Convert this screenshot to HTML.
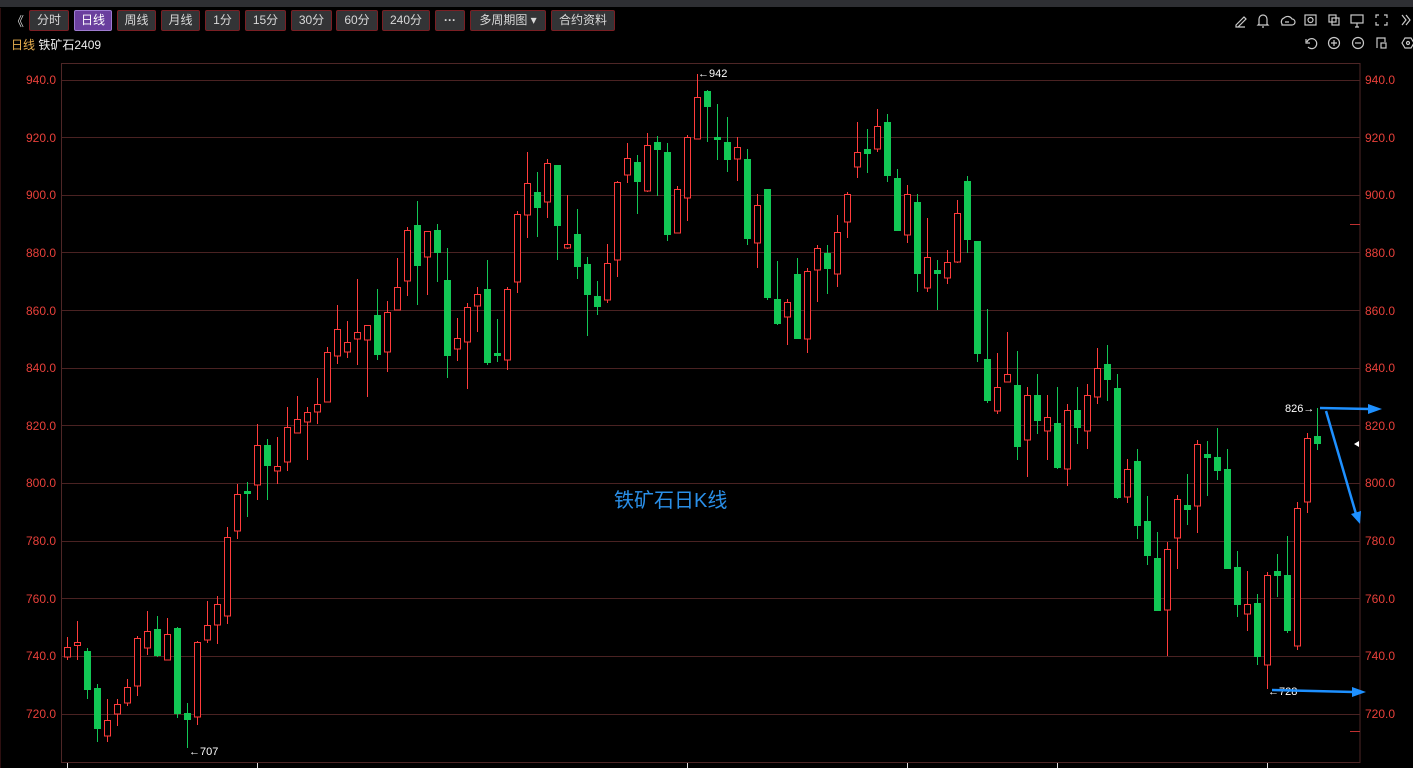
<!DOCTYPE html>
<html><head><meta charset="utf-8"><style>
*{margin:0;padding:0;box-sizing:border-box}
body{width:1413px;height:768px;background:#000;overflow:hidden;position:relative;font-family:"Liberation Sans","Noto Sans CJK SC",sans-serif;color:#ddd}
.top{position:absolute;left:0;top:0;width:1413px;height:7px;background:#2e2f33}
.btn{position:absolute;top:10px;height:21px;background:#333436;border:1px solid #7a1f24;color:#d8d8d8;font-size:12px;line-height:19px;text-align:center;border-radius:2px}
.sel{background:#6a3f9e;border-color:#9d7bd0;color:#fff}
.ax{position:absolute;font-size:12px;color:#e8403a}
svg{position:absolute;left:0;top:0}
</style></head><body>
<div class="top"></div>
<div style="position:absolute;left:11px;top:11px;font-size:13px;color:#ccc">《</div>
<div class="btn" style="left:29px;width:40px">分时</div>
<div class="btn sel" style="left:74px;width:38px">日线</div>
<div class="btn" style="left:117px;width:39px">周线</div>
<div class="btn" style="left:161px;width:39px">月线</div>
<div class="btn" style="left:205px;width:35px">1分</div>
<div class="btn" style="left:245px;width:41px">15分</div>
<div class="btn" style="left:291px;width:41px">30分</div>
<div class="btn" style="left:336px;width:42px">60分</div>
<div class="btn" style="left:382px;width:48px">240分</div>
<div class="btn" style="left:435px;width:30px;font-weight:bold">···</div>
<div class="btn" style="left:470px;width:76px">多周期图 ▾</div>
<div class="btn" style="left:551px;width:64px">合约资料</div>
<div style="position:absolute;left:11px;top:36px;font-size:12px"><span style="color:#e8b050">日线</span> <span style="color:#eee">铁矿石2409</span></div>
<div class="ax" style="left:26px;top:73px">940.0</div><div class="ax" style="left:26px;top:131px">920.0</div><div class="ax" style="left:26px;top:188px">900.0</div><div class="ax" style="left:26px;top:246px">880.0</div><div class="ax" style="left:26px;top:304px">860.0</div><div class="ax" style="left:26px;top:361px">840.0</div><div class="ax" style="left:26px;top:419px">820.0</div><div class="ax" style="left:26px;top:476px">800.0</div><div class="ax" style="left:26px;top:534px">780.0</div><div class="ax" style="left:26px;top:592px">760.0</div><div class="ax" style="left:26px;top:649px">740.0</div><div class="ax" style="left:26px;top:707px">720.0</div>
<div class="ax" style="left:1365px;top:73px">940.0</div><div class="ax" style="left:1365px;top:131px">920.0</div><div class="ax" style="left:1365px;top:188px">900.0</div><div class="ax" style="left:1365px;top:246px">880.0</div><div class="ax" style="left:1365px;top:304px">860.0</div><div class="ax" style="left:1365px;top:361px">840.0</div><div class="ax" style="left:1365px;top:419px">820.0</div><div class="ax" style="left:1365px;top:476px">800.0</div><div class="ax" style="left:1365px;top:534px">780.0</div><div class="ax" style="left:1365px;top:592px">760.0</div><div class="ax" style="left:1365px;top:649px">740.0</div><div class="ax" style="left:1365px;top:707px">720.0</div>
<div style="position:absolute;left:614px;top:484px;font-size:20px;color:#2a8fe8">铁矿石日K线</div>
<div style="position:absolute;left:698px;top:68px;font-size:11px;color:#fff">←942</div>
<div style="position:absolute;left:189px;top:746px;font-size:11px;color:#fff">←707</div>
<div style="position:absolute;left:1268px;top:686px;font-size:11px;color:#fff">←728</div>
<div style="position:absolute;left:1285px;top:403px;font-size:11px;color:#fff">826→</div>
<svg width="1413" height="768" viewBox="0 0 1413 768">
<g stroke="#c9c9c9" stroke-width="1.2" fill="none">
<path d="M1236 25l8-8 2 2-8 8h-2z M1236 27h9"/>
<path d="M1259 24v-5a4 4 0 0 1 8 0v5l1 1h-10z M1262 27h2"/>
<path d="M1282 24a4 4 0 0 1 2-6 5 5 0 0 1 8 1 3 3 0 0 1 0 6h-10z M1285 22h4"/>
<rect x="1305" y="15" width="11" height="10"/><circle cx="1310.5" cy="20" r="2.5"/>
<rect x="1329" y="15" width="7" height="7"/><rect x="1332" y="18" width="7" height="7"/>
<rect x="1351" y="15" width="12" height="8"/><path d="M1355 27h4M1357 23v4"/>
<path d="M1376 18v-3h3M1387 18v-3h-3M1376 22v3h3M1387 22v3h-3"/>
<path d="M1402 15l4 5-4 5M1406 15l4 5-4 5"/>
<path d="M1307 42a5 5 0 1 1 1 5M1306 39v4h4"/>
<circle cx="1334" cy="43" r="5.5"/><path d="M1331 43h6M1334 40v6"/>
<circle cx="1358" cy="43" r="5.5"/><path d="M1355 43h6"/>
<path d="M1377 48v-10h8v4"/><rect x="1381" y="43" width="5" height="5"/>
<path d="M1402 43l3-5h6l3 5-3 5h-6z"/><circle cx="1408" cy="43" r="1.5"/>
</g>
<path d="M0 8V768" stroke="#5a1e20"/>
<rect x="61.5" y="63.5" width="1298.5" height="699" fill="none" stroke="#4e2626"/>
<g stroke="#4a2222" stroke-width="1">
<path d="M62 80.5H1360M62 137.5H1360M62 195.5H1360M62 252.5H1360M62 310.5H1360M62 368.5H1360M62 425.5H1360M62 483.5H1360M62 541.5H1360M62 598.5H1360M62 656.5H1360M62 714.5H1360"/>
</g>
<path d="M1350 224.5h10M1350 731.5h10" stroke="#c03030"/>
<path d="M67.5 763v5M257.5 763v5M687.5 763v5M907.5 763v5M1057.5 763v5M1267.5 763v5" stroke="#ddd"/>
<path d="M1359 441l-5 3 5 3z" fill="#fff"/>
<g id="c">
<line x1="67.5" y1="637" x2="67.5" y2="660" stroke="#ff3b3b"/><rect x="64.5" y="647.5" width="6" height="9.5" fill="#000" stroke="#ff3b3b"/>
<line x1="77.5" y1="621" x2="77.5" y2="660" stroke="#ff3b3b"/><rect x="74.5" y="642.5" width="6" height="3" fill="#000" stroke="#ff3b3b"/>
<line x1="87.5" y1="648" x2="87.5" y2="699" stroke="#12c755"/><rect x="84" y="651" width="7" height="39" fill="#12c755"/>
<line x1="97.5" y1="684" x2="97.5" y2="742" stroke="#12c755"/><rect x="94" y="688" width="7" height="41" fill="#12c755"/>
<line x1="107.5" y1="699" x2="107.5" y2="742" stroke="#ff3b3b"/><rect x="104.5" y="720.5" width="6" height="15.5" fill="#000" stroke="#ff3b3b"/>
<line x1="117.5" y1="699" x2="117.5" y2="726" stroke="#ff3b3b"/><rect x="114.5" y="704.5" width="6" height="9.5" fill="#000" stroke="#ff3b3b"/>
<line x1="127.5" y1="679" x2="127.5" y2="706" stroke="#ff3b3b"/><rect x="124.5" y="687.5" width="6" height="15.5" fill="#000" stroke="#ff3b3b"/>
<line x1="137.5" y1="636" x2="137.5" y2="696" stroke="#ff3b3b"/><rect x="134.5" y="638.5" width="6" height="47.5" fill="#000" stroke="#ff3b3b"/>
<line x1="147.5" y1="611" x2="147.5" y2="655" stroke="#ff3b3b"/><rect x="144.5" y="631.5" width="6" height="16.5" fill="#000" stroke="#ff3b3b"/>
<line x1="157.5" y1="616" x2="157.5" y2="657" stroke="#12c755"/><rect x="154" y="629" width="7" height="27" fill="#12c755"/>
<line x1="167.5" y1="618" x2="167.5" y2="660" stroke="#ff3b3b"/><rect x="164.5" y="634.5" width="6" height="25.5" fill="#000" stroke="#ff3b3b"/>
<line x1="177.5" y1="627" x2="177.5" y2="718" stroke="#12c755"/><rect x="174" y="628" width="7" height="86" fill="#12c755"/>
<line x1="187.5" y1="703" x2="187.5" y2="748" stroke="#12c755"/><rect x="184" y="713" width="7" height="7" fill="#12c755"/>
<line x1="197.5" y1="641" x2="197.5" y2="725" stroke="#ff3b3b"/><rect x="194.5" y="642.5" width="6" height="74.5" fill="#000" stroke="#ff3b3b"/>
<line x1="207.5" y1="601" x2="207.5" y2="643" stroke="#ff3b3b"/><rect x="204.5" y="625.5" width="6" height="14.5" fill="#000" stroke="#ff3b3b"/>
<line x1="217.5" y1="596" x2="217.5" y2="644" stroke="#ff3b3b"/><rect x="214.5" y="604.5" width="6" height="20.5" fill="#000" stroke="#ff3b3b"/>
<line x1="227.5" y1="527" x2="227.5" y2="624" stroke="#ff3b3b"/><rect x="224.5" y="537.5" width="6" height="78.5" fill="#000" stroke="#ff3b3b"/>
<line x1="237.5" y1="484" x2="237.5" y2="539" stroke="#ff3b3b"/><rect x="234.5" y="494.5" width="6" height="36.5" fill="#000" stroke="#ff3b3b"/>
<line x1="247.5" y1="482" x2="247.5" y2="517" stroke="#12c755"/><rect x="244" y="491" width="7" height="3" fill="#12c755"/>
<line x1="257.5" y1="424" x2="257.5" y2="500" stroke="#ff3b3b"/><rect x="254.5" y="445.5" width="6" height="39.5" fill="#000" stroke="#ff3b3b"/>
<line x1="267.5" y1="439" x2="267.5" y2="500" stroke="#12c755"/><rect x="264" y="445" width="7" height="21" fill="#12c755"/>
<line x1="277.5" y1="437" x2="277.5" y2="484" stroke="#ff3b3b"/><rect x="274.5" y="466.5" width="6" height="4.5" fill="#000" stroke="#ff3b3b"/>
<line x1="287.5" y1="407" x2="287.5" y2="471" stroke="#ff3b3b"/><rect x="284.5" y="427.5" width="6" height="34.5" fill="#000" stroke="#ff3b3b"/>
<line x1="297.5" y1="396" x2="297.5" y2="433" stroke="#ff3b3b"/><rect x="294.5" y="419.5" width="6" height="13.5" fill="#000" stroke="#ff3b3b"/>
<line x1="307.5" y1="407" x2="307.5" y2="460" stroke="#ff3b3b"/><rect x="304.5" y="412.5" width="6" height="9.5" fill="#000" stroke="#ff3b3b"/>
<line x1="317.5" y1="378" x2="317.5" y2="424" stroke="#ff3b3b"/><rect x="314.5" y="404.5" width="6" height="7.5" fill="#000" stroke="#ff3b3b"/>
<line x1="327.5" y1="347" x2="327.5" y2="402" stroke="#ff3b3b"/><rect x="324.5" y="352.5" width="6" height="49.5" fill="#000" stroke="#ff3b3b"/>
<line x1="337.5" y1="305" x2="337.5" y2="364" stroke="#ff3b3b"/><rect x="334.5" y="329.5" width="6" height="26.5" fill="#000" stroke="#ff3b3b"/>
<line x1="347.5" y1="321" x2="347.5" y2="358" stroke="#ff3b3b"/><rect x="344.5" y="342.5" width="6" height="9.5" fill="#000" stroke="#ff3b3b"/>
<line x1="357.5" y1="279" x2="357.5" y2="365" stroke="#ff3b3b"/><rect x="354.5" y="332.5" width="6" height="6.5" fill="#000" stroke="#ff3b3b"/>
<line x1="367.5" y1="325" x2="367.5" y2="397" stroke="#ff3b3b"/><rect x="364.5" y="325.5" width="6" height="14.5" fill="#000" stroke="#ff3b3b"/>
<line x1="377.5" y1="289" x2="377.5" y2="360" stroke="#12c755"/><rect x="374" y="315" width="7" height="40" fill="#12c755"/>
<line x1="387.5" y1="301" x2="387.5" y2="372" stroke="#ff3b3b"/><rect x="384.5" y="312.5" width="6" height="39.5" fill="#000" stroke="#ff3b3b"/>
<line x1="397.5" y1="258" x2="397.5" y2="310" stroke="#ff3b3b"/><rect x="394.5" y="287.5" width="6" height="22.5" fill="#000" stroke="#ff3b3b"/>
<line x1="407.5" y1="227" x2="407.5" y2="296" stroke="#ff3b3b"/><rect x="404.5" y="230.5" width="6" height="50.5" fill="#000" stroke="#ff3b3b"/>
<line x1="417.5" y1="201" x2="417.5" y2="305" stroke="#12c755"/><rect x="414" y="225" width="7" height="41" fill="#12c755"/>
<line x1="427.5" y1="231" x2="427.5" y2="295" stroke="#ff3b3b"/><rect x="424.5" y="231.5" width="6" height="25.5" fill="#000" stroke="#ff3b3b"/>
<line x1="437.5" y1="224" x2="437.5" y2="282" stroke="#12c755"/><rect x="434" y="230" width="7" height="23" fill="#12c755"/>
<line x1="447.5" y1="248" x2="447.5" y2="378" stroke="#12c755"/><rect x="444" y="280" width="7" height="76" fill="#12c755"/>
<line x1="457.5" y1="318" x2="457.5" y2="361" stroke="#ff3b3b"/><rect x="454.5" y="338.5" width="6" height="10.5" fill="#000" stroke="#ff3b3b"/>
<line x1="467.5" y1="303" x2="467.5" y2="389" stroke="#ff3b3b"/><rect x="464.5" y="307.5" width="6" height="34.5" fill="#000" stroke="#ff3b3b"/>
<line x1="477.5" y1="287" x2="477.5" y2="332" stroke="#ff3b3b"/><rect x="474.5" y="294.5" width="6" height="11.5" fill="#000" stroke="#ff3b3b"/>
<line x1="487.5" y1="260" x2="487.5" y2="365" stroke="#12c755"/><rect x="484" y="289" width="7" height="74" fill="#12c755"/>
<line x1="497.5" y1="319" x2="497.5" y2="362" stroke="#12c755"/><rect x="494" y="353" width="7" height="3" fill="#12c755"/>
<line x1="507.5" y1="287" x2="507.5" y2="370" stroke="#ff3b3b"/><rect x="504.5" y="289.5" width="6" height="70.5" fill="#000" stroke="#ff3b3b"/>
<line x1="517.5" y1="211" x2="517.5" y2="293" stroke="#ff3b3b"/><rect x="514.5" y="214.5" width="6" height="67.5" fill="#000" stroke="#ff3b3b"/>
<line x1="527.5" y1="152" x2="527.5" y2="238" stroke="#ff3b3b"/><rect x="524.5" y="183.5" width="6" height="31.5" fill="#000" stroke="#ff3b3b"/>
<line x1="537.5" y1="172" x2="537.5" y2="237" stroke="#12c755"/><rect x="534" y="192" width="7" height="16" fill="#12c755"/>
<line x1="547.5" y1="159" x2="547.5" y2="218" stroke="#ff3b3b"/><rect x="544.5" y="163.5" width="6" height="38.5" fill="#000" stroke="#ff3b3b"/>
<line x1="557.5" y1="165" x2="557.5" y2="260" stroke="#12c755"/><rect x="554" y="165" width="7" height="61" fill="#12c755"/>
<line x1="567.5" y1="195" x2="567.5" y2="249" stroke="#ff3b3b"/><rect x="564.5" y="244.5" width="6" height="3.5" fill="#000" stroke="#ff3b3b"/>
<line x1="577.5" y1="209" x2="577.5" y2="279" stroke="#12c755"/><rect x="574" y="234" width="7" height="33" fill="#12c755"/>
<line x1="587.5" y1="257" x2="587.5" y2="336" stroke="#12c755"/><rect x="584" y="264" width="7" height="31" fill="#12c755"/>
<line x1="597.5" y1="281" x2="597.5" y2="315" stroke="#12c755"/><rect x="594" y="296" width="7" height="11" fill="#12c755"/>
<line x1="607.5" y1="244" x2="607.5" y2="303" stroke="#ff3b3b"/><rect x="604.5" y="263.5" width="6" height="36.5" fill="#000" stroke="#ff3b3b"/>
<line x1="617.5" y1="181" x2="617.5" y2="277" stroke="#ff3b3b"/><rect x="614.5" y="182.5" width="6" height="77.5" fill="#000" stroke="#ff3b3b"/>
<line x1="627.5" y1="143" x2="627.5" y2="183" stroke="#ff3b3b"/><rect x="624.5" y="158.5" width="6" height="16.5" fill="#000" stroke="#ff3b3b"/>
<line x1="637.5" y1="155" x2="637.5" y2="214" stroke="#12c755"/><rect x="634" y="162" width="7" height="20" fill="#12c755"/>
<line x1="647.5" y1="133" x2="647.5" y2="192" stroke="#ff3b3b"/><rect x="644.5" y="145.5" width="6" height="45.5" fill="#000" stroke="#ff3b3b"/>
<line x1="657.5" y1="136" x2="657.5" y2="196" stroke="#12c755"/><rect x="654" y="142" width="7" height="8" fill="#12c755"/>
<line x1="667.5" y1="143" x2="667.5" y2="241" stroke="#12c755"/><rect x="664" y="152" width="7" height="83" fill="#12c755"/>
<line x1="677.5" y1="186" x2="677.5" y2="233" stroke="#ff3b3b"/><rect x="674.5" y="189.5" width="6" height="43.5" fill="#000" stroke="#ff3b3b"/>
<line x1="687.5" y1="135" x2="687.5" y2="221" stroke="#ff3b3b"/><rect x="684.5" y="137.5" width="6" height="60.5" fill="#000" stroke="#ff3b3b"/>
<line x1="697.5" y1="74" x2="697.5" y2="139" stroke="#ff3b3b"/><rect x="694.5" y="97.5" width="6" height="41.5" fill="#000" stroke="#ff3b3b"/>
<line x1="707.5" y1="90" x2="707.5" y2="142" stroke="#12c755"/><rect x="704" y="91" width="7" height="16" fill="#12c755"/>
<line x1="717.5" y1="104" x2="717.5" y2="160" stroke="#12c755"/><rect x="714" y="137" width="7" height="3" fill="#12c755"/>
<line x1="727.5" y1="117" x2="727.5" y2="172" stroke="#12c755"/><rect x="724" y="142" width="7" height="18" fill="#12c755"/>
<line x1="737.5" y1="137" x2="737.5" y2="181" stroke="#ff3b3b"/><rect x="734.5" y="147.5" width="6" height="11.5" fill="#000" stroke="#ff3b3b"/>
<line x1="747.5" y1="149" x2="747.5" y2="245" stroke="#12c755"/><rect x="744" y="159" width="7" height="80" fill="#12c755"/>
<line x1="757.5" y1="194" x2="757.5" y2="268" stroke="#ff3b3b"/><rect x="754.5" y="205.5" width="6" height="37.5" fill="#000" stroke="#ff3b3b"/>
<line x1="767.5" y1="189" x2="767.5" y2="300" stroke="#12c755"/><rect x="764" y="189" width="7" height="109" fill="#12c755"/>
<line x1="777.5" y1="261" x2="777.5" y2="325" stroke="#12c755"/><rect x="774" y="299" width="7" height="25" fill="#12c755"/>
<line x1="787.5" y1="299" x2="787.5" y2="345" stroke="#ff3b3b"/><rect x="784.5" y="302.5" width="6" height="14.5" fill="#000" stroke="#ff3b3b"/>
<line x1="797.5" y1="258" x2="797.5" y2="339" stroke="#12c755"/><rect x="794" y="274" width="7" height="65" fill="#12c755"/>
<line x1="807.5" y1="268" x2="807.5" y2="353" stroke="#ff3b3b"/><rect x="804.5" y="271.5" width="6" height="67.5" fill="#000" stroke="#ff3b3b"/>
<line x1="817.5" y1="245" x2="817.5" y2="302" stroke="#ff3b3b"/><rect x="814.5" y="248.5" width="6" height="21.5" fill="#000" stroke="#ff3b3b"/>
<line x1="827.5" y1="245" x2="827.5" y2="294" stroke="#12c755"/><rect x="824" y="253" width="7" height="16" fill="#12c755"/>
<line x1="837.5" y1="215" x2="837.5" y2="287" stroke="#ff3b3b"/><rect x="834.5" y="232.5" width="6" height="41.5" fill="#000" stroke="#ff3b3b"/>
<line x1="847.5" y1="192" x2="847.5" y2="238" stroke="#ff3b3b"/><rect x="844.5" y="194.5" width="6" height="27.5" fill="#000" stroke="#ff3b3b"/>
<line x1="857.5" y1="122" x2="857.5" y2="178" stroke="#ff3b3b"/><rect x="854.5" y="152.5" width="6" height="14.5" fill="#000" stroke="#ff3b3b"/>
<line x1="867.5" y1="129" x2="867.5" y2="173" stroke="#12c755"/><rect x="864" y="149" width="7" height="5" fill="#12c755"/>
<line x1="877.5" y1="109" x2="877.5" y2="152" stroke="#ff3b3b"/><rect x="874.5" y="126.5" width="6" height="22.5" fill="#000" stroke="#ff3b3b"/>
<line x1="887.5" y1="114" x2="887.5" y2="182" stroke="#12c755"/><rect x="884" y="122" width="7" height="54" fill="#12c755"/>
<line x1="897.5" y1="169" x2="897.5" y2="231" stroke="#12c755"/><rect x="894" y="178" width="7" height="53" fill="#12c755"/>
<line x1="907.5" y1="185" x2="907.5" y2="243" stroke="#ff3b3b"/><rect x="904.5" y="194.5" width="6" height="40.5" fill="#000" stroke="#ff3b3b"/>
<line x1="917.5" y1="194" x2="917.5" y2="292" stroke="#12c755"/><rect x="914" y="202" width="7" height="72" fill="#12c755"/>
<line x1="927.5" y1="218" x2="927.5" y2="292" stroke="#ff3b3b"/><rect x="924.5" y="257.5" width="6" height="30.5" fill="#000" stroke="#ff3b3b"/>
<line x1="937.5" y1="260" x2="937.5" y2="310" stroke="#12c755"/><rect x="934" y="270" width="7" height="4" fill="#12c755"/>
<line x1="947.5" y1="250" x2="947.5" y2="284" stroke="#ff3b3b"/><rect x="944.5" y="262.5" width="6" height="15.5" fill="#000" stroke="#ff3b3b"/>
<line x1="957.5" y1="200" x2="957.5" y2="263" stroke="#ff3b3b"/><rect x="954.5" y="213.5" width="6" height="48.5" fill="#000" stroke="#ff3b3b"/>
<line x1="967.5" y1="176" x2="967.5" y2="253" stroke="#12c755"/><rect x="964" y="181" width="7" height="59" fill="#12c755"/>
<line x1="977.5" y1="241" x2="977.5" y2="362" stroke="#12c755"/><rect x="974" y="241" width="7" height="113" fill="#12c755"/>
<line x1="987.5" y1="309" x2="987.5" y2="403" stroke="#12c755"/><rect x="984" y="359" width="7" height="42" fill="#12c755"/>
<line x1="997.5" y1="353" x2="997.5" y2="414" stroke="#ff3b3b"/><rect x="994.5" y="387.5" width="6" height="23.5" fill="#000" stroke="#ff3b3b"/>
<line x1="1007.5" y1="332" x2="1007.5" y2="382" stroke="#ff3b3b"/><rect x="1004.5" y="374.5" width="6" height="7.5" fill="#000" stroke="#ff3b3b"/>
<line x1="1017.5" y1="351" x2="1017.5" y2="460" stroke="#12c755"/><rect x="1014" y="385" width="7" height="62" fill="#12c755"/>
<line x1="1027.5" y1="387" x2="1027.5" y2="477" stroke="#ff3b3b"/><rect x="1024.5" y="395.5" width="6" height="44.5" fill="#000" stroke="#ff3b3b"/>
<line x1="1037.5" y1="374" x2="1037.5" y2="434" stroke="#12c755"/><rect x="1034" y="395" width="7" height="26" fill="#12c755"/>
<line x1="1047.5" y1="395" x2="1047.5" y2="460" stroke="#ff3b3b"/><rect x="1044.5" y="417.5" width="6" height="13.5" fill="#000" stroke="#ff3b3b"/>
<line x1="1057.5" y1="387" x2="1057.5" y2="469" stroke="#12c755"/><rect x="1054" y="423" width="7" height="45" fill="#12c755"/>
<line x1="1067.5" y1="404" x2="1067.5" y2="486" stroke="#ff3b3b"/><rect x="1064.5" y="410.5" width="6" height="58.5" fill="#000" stroke="#ff3b3b"/>
<line x1="1077.5" y1="387" x2="1077.5" y2="444" stroke="#12c755"/><rect x="1074" y="410" width="7" height="18" fill="#12c755"/>
<line x1="1087.5" y1="384" x2="1087.5" y2="449" stroke="#ff3b3b"/><rect x="1084.5" y="395.5" width="6" height="35.5" fill="#000" stroke="#ff3b3b"/>
<line x1="1097.5" y1="348" x2="1097.5" y2="404" stroke="#ff3b3b"/><rect x="1094.5" y="368.5" width="6" height="28.5" fill="#000" stroke="#ff3b3b"/>
<line x1="1107.5" y1="345" x2="1107.5" y2="401" stroke="#12c755"/><rect x="1104" y="364" width="7" height="16" fill="#12c755"/>
<line x1="1117.5" y1="374" x2="1117.5" y2="499" stroke="#12c755"/><rect x="1114" y="388" width="7" height="110" fill="#12c755"/>
<line x1="1127.5" y1="459" x2="1127.5" y2="503" stroke="#ff3b3b"/><rect x="1124.5" y="469.5" width="6" height="27.5" fill="#000" stroke="#ff3b3b"/>
<line x1="1137.5" y1="449" x2="1137.5" y2="539" stroke="#12c755"/><rect x="1134" y="461" width="7" height="65" fill="#12c755"/>
<line x1="1147.5" y1="496" x2="1147.5" y2="565" stroke="#12c755"/><rect x="1144" y="521" width="7" height="35" fill="#12c755"/>
<line x1="1157.5" y1="532" x2="1157.5" y2="611" stroke="#12c755"/><rect x="1154" y="558" width="7" height="53" fill="#12c755"/>
<line x1="1167.5" y1="542" x2="1167.5" y2="656" stroke="#ff3b3b"/><rect x="1164.5" y="549.5" width="6" height="60.5" fill="#000" stroke="#ff3b3b"/>
<line x1="1177.5" y1="495" x2="1177.5" y2="569" stroke="#ff3b3b"/><rect x="1174.5" y="499.5" width="6" height="38.5" fill="#000" stroke="#ff3b3b"/>
<line x1="1187.5" y1="474" x2="1187.5" y2="525" stroke="#12c755"/><rect x="1184" y="505" width="7" height="5" fill="#12c755"/>
<line x1="1197.5" y1="440" x2="1197.5" y2="533" stroke="#ff3b3b"/><rect x="1194.5" y="444.5" width="6" height="61.5" fill="#000" stroke="#ff3b3b"/>
<line x1="1207.5" y1="441" x2="1207.5" y2="496" stroke="#12c755"/><rect x="1204" y="454" width="7" height="4" fill="#12c755"/>
<line x1="1217.5" y1="428" x2="1217.5" y2="480" stroke="#12c755"/><rect x="1214" y="457" width="7" height="14" fill="#12c755"/>
<line x1="1227.5" y1="449" x2="1227.5" y2="569" stroke="#12c755"/><rect x="1224" y="469" width="7" height="100" fill="#12c755"/>
<line x1="1237.5" y1="551" x2="1237.5" y2="617" stroke="#12c755"/><rect x="1234" y="567" width="7" height="38" fill="#12c755"/>
<line x1="1247.5" y1="571" x2="1247.5" y2="631" stroke="#ff3b3b"/><rect x="1244.5" y="604.5" width="6" height="9.5" fill="#000" stroke="#ff3b3b"/>
<line x1="1257.5" y1="594" x2="1257.5" y2="665" stroke="#12c755"/><rect x="1254" y="603" width="7" height="54" fill="#12c755"/>
<line x1="1267.5" y1="572" x2="1267.5" y2="689" stroke="#ff3b3b"/><rect x="1264.5" y="575.5" width="6" height="89.5" fill="#000" stroke="#ff3b3b"/>
<line x1="1277.5" y1="554" x2="1277.5" y2="597" stroke="#12c755"/><rect x="1274" y="571" width="7" height="5" fill="#12c755"/>
<line x1="1287.5" y1="536" x2="1287.5" y2="633" stroke="#12c755"/><rect x="1284" y="575" width="7" height="56" fill="#12c755"/>
<line x1="1297.5" y1="502" x2="1297.5" y2="650" stroke="#ff3b3b"/><rect x="1294.5" y="508.5" width="6" height="137.5" fill="#000" stroke="#ff3b3b"/>
<line x1="1307.5" y1="433" x2="1307.5" y2="513" stroke="#ff3b3b"/><rect x="1304.5" y="438.5" width="6" height="63.5" fill="#000" stroke="#ff3b3b"/>
<line x1="1317.5" y1="408" x2="1317.5" y2="450" stroke="#12c755"/><rect x="1314" y="436" width="7" height="8" fill="#12c755"/>
</g>
<g stroke="#1e90ff" stroke-width="2.5" fill="#1e90ff">
<path d="M1320 408L1370 409" fill="none"/><path d="M1382 409l-14-5v10z" stroke="none"/>
<path d="M1326 411L1356 514" fill="none"/><path d="M1360 524l-9-10 10-3z" stroke="none"/>
<path d="M1272 690L1354 692" fill="none"/><path d="M1366 692l-14-5v10z" stroke="none"/>
</g>
</svg>
</body></html>
